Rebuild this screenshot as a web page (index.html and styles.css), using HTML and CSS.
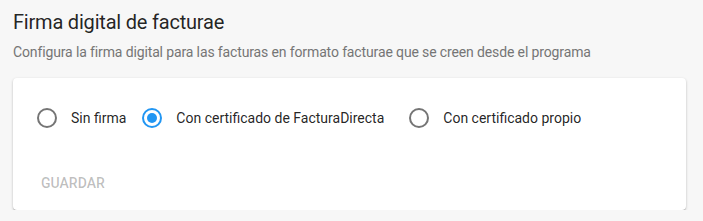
FILE: index.html
```html
<!DOCTYPE html>
<html lang="es">
<head>
    <meta charset="UTF-8">
    <title>Firma digital de facturae</title>
    <link rel="stylesheet" href="styles.css">
</head>
<body>
    <div class="section">
        <h2 class="section-title">Firma digital de facturae</h2>
        <p class="section-subtitle">Configura la firma digital para las facturas en formato facturae que se creen desde el programa</p>

        <div class="card">
            <div class="radio-group">
                <label class="radio radio-sin">
                    <span class="radio-icon"></span>
                    <span class="radio-label">Sin firma</span>
                </label>
                <label class="radio radio-fd checked">
                    <span class="radio-icon"></span>
                    <span class="radio-label">Con certificado de FacturaDirecta</span>
                </label>
                <label class="radio radio-propio">
                    <span class="radio-icon"></span>
                    <span class="radio-label">Con certificado propio</span>
                </label>
            </div>
            <div class="actions">
                <button class="btn" disabled>Guardar</button>
            </div>
        </div>
    </div>
</body>
</html>
```

FILE: styles.css
```css
body {
    margin: 0;
    background-color: #f7f7f7;
    font-family: Roboto, "Liberation Sans", Arial, sans-serif;
    color: rgba(0, 0, 0, 0.87);
}

.section {
    padding: 0 17px 0 13px;
}

.section-title {
    margin: 0;
    padding-top: 8px;
    font-size: 20px;
    font-weight: 400;
    line-height: 28px;
    letter-spacing: -0.2px;
}

.section-subtitle {
    margin: 6px 0 0;
    font-size: 14px;
    line-height: 20px;
    letter-spacing: -0.13px;
    color: #757575;
}

.card {
    margin-top: 16px;
    background-color: #ffffff;
    border-radius: 4px;
    box-shadow: 0 1px 3px rgba(0, 0, 0, 0.2), 0 1px 1px rgba(0, 0, 0, 0.14), 0 2px 1px -1px rgba(0, 0, 0, 0.12);
    padding: 18px 12px 9px;
}

.radio-group {
    display: flex;
    align-items: center;
    height: 44px;
}

.radio {
    display: flex;
    align-items: center;
    padding-left: 12px;
    cursor: pointer;
}

.radio-icon {
    width: 20px;
    height: 20px;
    box-sizing: border-box;
    border: 2px solid #757575;
    border-radius: 50%;
    margin-right: 14px;
    position: relative;
}

.radio.checked .radio-icon {
    border-color: #2196f3;
}

.radio.checked .radio-icon::after {
    content: "";
    position: absolute;
    top: 3px;
    left: 3px;
    width: 10px;
    height: 10px;
    border-radius: 50%;
    background-color: #2196f3;
}

.radio-label {
    font-size: 14px;
    line-height: 20px;
}

.radio-fd {
    margin-left: 4px;
}

.radio-propio {
    margin-left: 13px;
}

.actions {
    margin-top: 25px;
}

.btn {
    height: 36px;
    padding: 0 16px;
    border: none;
    background: none;
    font-family: inherit;
    font-size: 14px;
    font-weight: 500;
    text-transform: uppercase;
    color: rgba(0, 0, 0, 0.26);
}
```
